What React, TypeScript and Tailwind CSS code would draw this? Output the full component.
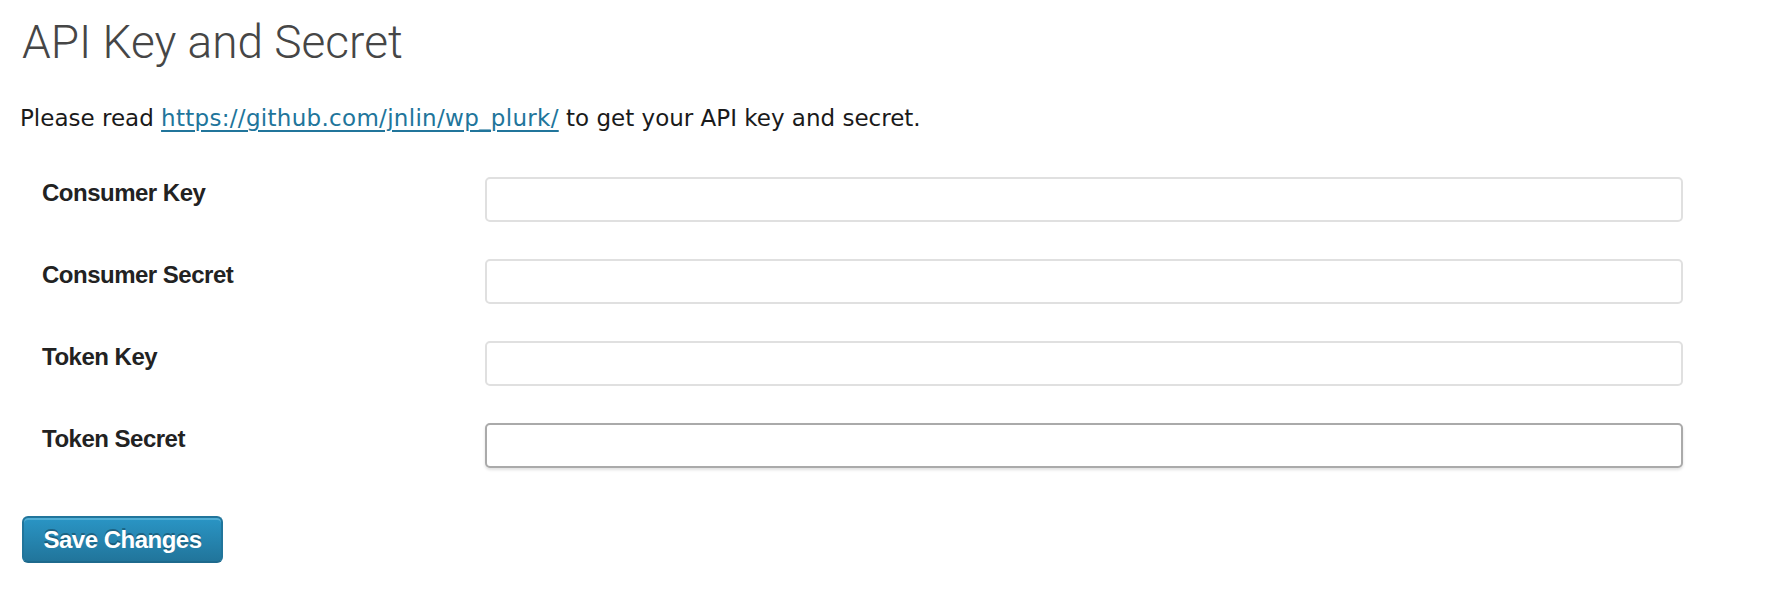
const FIELDS = [
  { id: "consumer_key", label: "Consumer Key" },
  { id: "consumer_secret", label: "Consumer Secret" },
  { id: "token_key", label: "Token Key" },
  { id: "token_secret", label: "Token Secret", focused: true },
];

export default function App() {
  return (
    <div className="min-h-[610px] bg-white pl-[20px] pt-[14px]">
      <h2 className="ml-[2px] font-['Roboto',sans-serif] text-[46px] font-light leading-[56px] text-[#464646]">
        API Key and Secret
      </h2>

      <p className="mt-[32px] font-['DejaVu_Sans',sans-serif] text-[23px] leading-[32px] text-[#1a1a1a]">
        Please read{" "}
        <a
          href="#"
          className="tracking-[0.3px] text-[#21759b] underline decoration-[2px] underline-offset-[4px]"
        >
          https://github.com/jnlin/wp_plurk/
        </a>{" "}
        to get your API key and secret.
      </p>

      <form className="mt-[43px] grid grid-cols-[465px_1198px] gap-y-[37px]">
        {FIELDS.map((f) => (
          <div key={f.id} className="contents">
            <label
              htmlFor={f.id}
              className="pl-[22px] font-['Liberation_Sans',Arial,sans-serif] text-[24px] font-bold leading-[32px] tracking-[-0.5px] text-[#222]"
            >
              {f.label}
            </label>
            <input
              id={f.id}
              type="text"
              className={`h-[45px] w-full rounded-[5px] border-2 bg-white px-2 outline-none ${
                f.focused
                  ? "border-[#aaa] shadow-[0_2px_3px_rgba(0,0,0,0.12)]"
                  : "border-[#e0e0e0]"
              }`}
            />
          </div>
        ))}
      </form>

      <button
        type="button"
        className="ml-[2px] mt-[48px] flex h-[47px] w-[201px] items-center justify-center rounded-[6px] border-2 border-[#21759b] border-b-[#1e6a8d] bg-gradient-to-b from-[#2a95c5] to-[#21759b] font-['Liberation_Sans',Arial,sans-serif] text-[24px] font-bold tracking-[-0.5px] text-white shadow-[inset_0_2px_0_rgba(120,200,230,0.5)] [text-shadow:0_-2px_0_rgba(0,0,0,0.3)]"
      >
        Save Changes
      </button>
    </div>
  );
}
